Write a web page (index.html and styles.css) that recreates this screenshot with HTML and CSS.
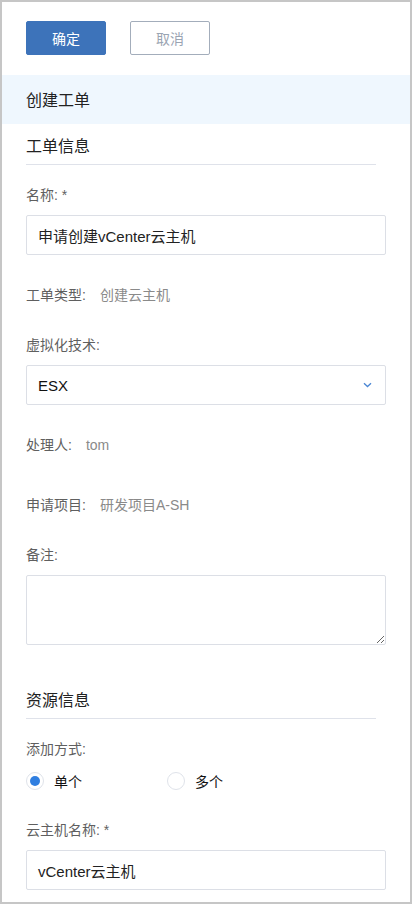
FILE: index.html
```html
<!DOCTYPE html>
<html lang="zh-CN">
<head>
<meta charset="utf-8">
<title>创建工单</title>
<link rel="stylesheet" href="styles.css">
</head>
<body>
<div class="frame">
  <div class="actions">
    <button class="btn btn-primary">确定</button>
    <button class="btn btn-default">取消</button>
  </div>
  <div class="band">创建工单</div>
  <div class="content">
    <div class="section-title first">工单信息</div>

    <div class="label gap-20">名称: *</div>
    <div class="field">申请创建vCenter云主机</div>

    <div class="info gap-30"><span class="info-key">工单类型:</span><span class="info-val">创建云主机</span></div>

    <div class="label gap-30">虚拟化技术:</div>
    <div class="field select">
      <span>ESX</span>
      <svg class="chev" width="9" height="6" viewBox="0 0 9 6"><path d="M1 1.2 L4.5 4.5 L8 1.2" fill="none" stroke="#4a86d4" stroke-width="1.3"/></svg>
    </div>

    <div class="info gap-30"><span class="info-key">处理人:</span><span class="info-val">tom</span></div>

    <div class="info gap-40"><span class="info-key">申请项目:</span><span class="info-val">研发项目A-SH</span></div>

    <div class="label gap-30">备注:</div>
    <textarea class="textarea"></textarea>

    <div class="section-title gap-44">资源信息</div>

    <div class="label gap-20">添加方式:</div>
    <div class="radios">
      <label class="radio"><span class="dot checked"></span><span>单个</span></label>
      <label class="radio"><span class="dot"></span><span>多个</span></label>
    </div>

    <div class="label gap-29">云主机名称: *</div>
    <div class="field">vCenter云主机</div>
  </div>
</div>
</body>
</html>
```

FILE: styles.css
```css
* { box-sizing: border-box; }
html, body { margin: 0; padding: 0; background: #fff; }
body {
  font-family: "Liberation Sans", "Noto Sans CJK SC", sans-serif;
  font-size: 14px;
  color: #333;
}
.frame {
  width: 412px;
  height: 904px;
  border: 2px solid #c6c6c6;
  overflow: hidden;
  background: #fff;
}
.actions {
  display: flex;
  gap: 24px;
  padding: 19px 0 0 24px;
}
.btn {
  width: 80px;
  height: 34px;
  border-radius: 2px;
  font-family: "Noto Sans CJK SC", sans-serif;
  font-size: 14px;
  padding: 0;
  cursor: pointer;
}
.btn-primary {
  background: #3d73ba;
  border: 1px solid #3d73ba;
  color: #fff;
}
.btn-default {
  background: #fff;
  border: 1px solid #a3adbb;
  color: #9aa4b2;
}
.band {
  margin-top: 20px;
  height: 49px;
  line-height: 49px;
  padding-left: 24px;
  background: #eff7fe;
  font-family: "Noto Sans CJK SC", sans-serif;
  font-size: 16px;
  color: #222;
}
.content {
  padding: 0 24px;
  display: flex;
  flex-direction: column;
  align-items: flex-start;
}
.section-title {
  width: 350px;
  line-height: 20px;
  padding-bottom: 9px;
  border-bottom: 1px solid #dfe2ea;
  font-family: "Noto Sans CJK SC", sans-serif;
  font-size: 16px;
  color: #222;
}
.section-title.first { margin-top: 11px; }
.label, .info {
  line-height: 20px;
  font-size: 14px;
  color: #5f5f5f;
}
.info { display: flex; gap: 14px; }
.info-val { color: #8a8a8a; }
.gap-20 { margin-top: 20px; }
.gap-29 { margin-top: 29px; }
.gap-30 { margin-top: 30px; }
.gap-40 { margin-top: 40px; }
.gap-44 { margin-top: 44px; }
.field {
  margin-top: 10px;
  width: 360px;
  height: 40px;
  border: 1px solid #dcdfe6;
  border-radius: 2px;
  padding: 0 11px;
  display: flex;
  align-items: center;
  font-size: 15px;
  color: #222;
}
.select { justify-content: space-between; color: #111; }
.chev { margin-right: 2px; }
.textarea {
  display: block;
  margin-top: 10px;
  width: 360px;
  height: 70px;
  border: 1px solid #dcdfe6;
  border-radius: 2px;
  resize: vertical;
  font-family: inherit;
}
.radios {
  margin-top: 12px;
  display: flex;
  height: 20px;
  align-items: center;
}
.radio {
  display: flex;
  align-items: center;
  gap: 10px;
  width: 141px;
  font-size: 14px;
  color: #111;
}
.dot {
  width: 18px;
  height: 18px;
  border-radius: 50%;
  border: 1px solid #dfe3ea;
  display: flex;
  align-items: center;
  justify-content: center;
  flex: none;
}
.dot.checked::after {
  content: "";
  width: 10px;
  height: 10px;
  border-radius: 50%;
  background: #2f7ee0;
}
```
